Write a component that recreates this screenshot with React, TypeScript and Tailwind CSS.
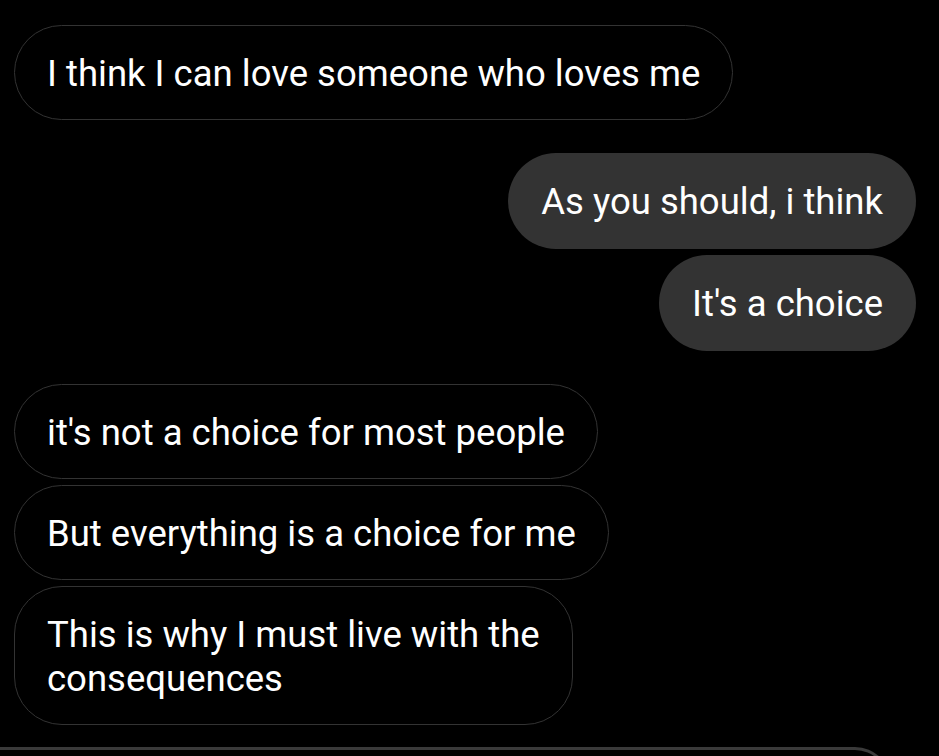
import React from 'react';

type Msg = { text: React.ReactNode; mine?: boolean; gapTop: string };

const messages: Msg[] = [
  { text: 'I think I can love someone who loves me', gapTop: 'mt-[25px]' },
  { text: 'As you should, i think', mine: true, gapTop: 'mt-[33px]' },
  { text: "It's a choice", mine: true, gapTop: 'mt-[6px]' },
  { text: "it's not a choice for most people", gapTop: 'mt-[33px]' },
  { text: 'But everything is a choice for me', gapTop: 'mt-[6px]' },
  {
    text: (
      <>
        This is why I must live with the
        <br />
        consequences
      </>
    ),
    gapTop: 'mt-[6px]',
  },
];

function Bubble({ msg }: { msg: Msg }) {
  return (
    <div className={`flex ${msg.mine ? 'justify-end' : 'justify-start'} ${msg.gapTop}`}>
      <div
        className={
          msg.mine
            ? 'rounded-[48px] bg-[#333333] px-[33px] pt-[27px] pb-[25px] text-white'
            : 'rounded-[48px] border border-[#333333] px-[32px] pt-[26px] pb-[23px] text-white'
        }
      >
        <p className="text-[36.5px] leading-[44px]">{msg.text}</p>
      </div>
    </div>
  );
}

export default function App() {
  return (
    <div
      className="h-[756px] w-[939px] overflow-hidden bg-black"
      style={{ fontFamily: 'Roboto, "Noto Sans", sans-serif' }}
    >
      <div className="flex flex-col pl-[14px] pr-[23px]">
        {messages.map((m, i) => (
          <Bubble key={i} msg={m} />
        ))}
      </div>
      <div className="mt-[22px] h-[60px] w-[891px] rounded-tr-[36px] border-t-[3px] border-r-[3px] border-[#3a3a3a]" />
    </div>
  );
}
